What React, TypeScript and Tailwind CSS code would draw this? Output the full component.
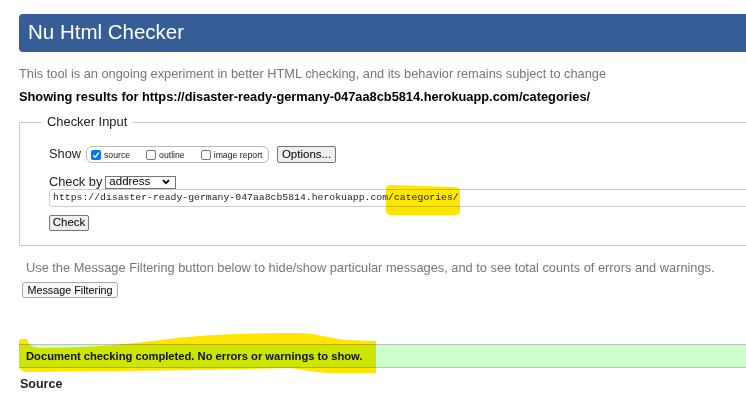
import { FC } from 'react'

const Box: FC<{ checked?: boolean }> = ({ checked }) => (
  <span
    className={
      checked
        ? 'inline-flex shrink-0 items-center justify-center w-[10px] h-[10px] rounded-[2px] bg-[#0075ff]'
        : 'inline-flex shrink-0 w-[10px] h-[10px] rounded-[2px] border border-[#767676] bg-white'
    }
  >
    {checked && (
      <svg width="8" height="8" viewBox="0 0 8 8">
        <path d="M1.2 4.2 L3.2 6.2 L6.8 1.6" stroke="white" strokeWidth="1.5" fill="none" />
      </svg>
    )}
  </span>
)

export default function App() {
  return (
    <div className="relative w-[746px] h-[400px] overflow-hidden bg-white font-['Liberation_Sans',Arial,sans-serif] text-black">
      <div className="w-[800px] pl-[19px] pt-[14px]">
        {/* Header */}
        <div className="h-[38px] bg-[#365d96] rounded-l-[4px] flex items-center pl-[9px] pb-[2px]">
          <h1 className="text-white text-[20.5px] leading-none">Nu Html Checker</h1>
        </div>

        <p className="mt-[12px] text-[12.8px] leading-[20px] text-[#777] whitespace-nowrap">
          This tool is an ongoing experiment in better HTML checking, and its behavior remains subject to change
        </p>
        <p className="mt-[5px] text-[12.8px] leading-[16px] font-bold whitespace-nowrap">
          Showing results for https://disaster-ready-germany-047aa8cb5814.herokuapp.com/categories/
        </p>

        {/* Checker input */}
        <fieldset className="mt-[9px] border border-[#ccc] border-r-0 pb-[14px]">
          <legend className="ml-[22px] px-[5px] text-[12.9px] leading-[16px] text-[#222]">Checker Input</legend>

          <div className="pl-[29px]">
            <div className="mt-[16px] flex items-center h-[17px]">
              <span className="text-[12.8px] leading-none text-[#222]">Show</span>
              <div className="ml-[5px] h-[17px] w-[183px] border border-[#bbb] rounded-[6px] flex items-center pl-[4px] text-[8.7px] text-[#222] whitespace-nowrap">
                <Box checked />
                <span className="ml-[3px] mt-[2px]">source</span>
                <span className="ml-[16px] flex"><Box /></span>
                <span className="ml-[3px] mt-[2px]">outline</span>
                <span className="ml-[16px] flex"><Box /></span>
                <span className="ml-[3px] mt-[2px]">image report</span>
              </div>
              <button className="ml-[8px] h-[17px] w-[59px] bg-[#efefef] border border-[#767676] rounded-[2px] text-[11.5px] leading-none">
                Options...
              </button>
            </div>

            <div className="mt-[12px] flex items-center h-[14px]">
              <span className="text-[12.8px] leading-none text-[#222]">Check by</span>
              <div className="ml-[3px] h-[13px] w-[71px] border border-[#767676] flex items-center pl-[3px] pr-[5px] text-[11.5px] leading-none">
                <span>address</span>
                <svg className="ml-auto" width="8" height="6" viewBox="0 0 8 6">
                  <path d="M1 1.2 L4 4.2 L7 1.2" stroke="black" strokeWidth="1.8" fill="none" />
                </svg>
              </div>
            </div>

            <div className="h-[18px] border border-[#ccc] border-r-0 rounded-l-[4px] flex items-center pl-[3px] font-['Liberation_Mono',monospace] text-[9.8px] text-[#222] whitespace-nowrap">
              https://disaster-ready-germany-047aa8cb5814.herokuapp.com/categories/
            </div>

            <button className="mt-[8px] block h-[16px] w-[40px] bg-[#efefef] border border-[#767676] rounded-[2px] text-[11.5px] leading-none">
              Check
            </button>
          </div>
        </fieldset>

        <p className="mt-[13px] ml-[7px] text-[12.8px] leading-[18px] text-[#777] whitespace-nowrap">
          Use the Message Filtering button below to hide/show particular messages, and to see total counts of errors and warnings.
        </p>
        <button className="mt-[5px] ml-[3px] block h-[16px] w-[96px] bg-[#f8f8f8] border border-[#aaa] rounded-[3px] text-[10.8px] leading-none">
          Message Filtering
        </button>

        {/* Result */}
        <div className="mt-[46px] h-[24px] bg-[#ccffcc] border-y border-[#c0c0c0] flex items-center pl-[7px] text-[11.2px] font-bold text-[#111] whitespace-nowrap">
          Document checking completed. No errors or warnings to show.
        </div>
        <h2 className="mt-[8px] ml-[1px] text-[12.5px] leading-[16px] font-bold text-[#222]">Source</h2>
      </div>

      {/* Highlighter marks */}
      <svg className="absolute inset-0 pointer-events-none mix-blend-multiply" width="746" height="400" viewBox="0 0 746 400">
        <path
          d="M386,189 Q386,185 391,185 L454,187 Q460,187 460,191 L460,211 Q460,215 455,215 L391,215 Q386,215 386,211 Z"
          fill="#ffe600"
        />
        <path
          d="M19,341 Q19,339 22,339 L27,339 Q29,348 40,348 C90,348 130,344 160,340 C200,334 260,333 300,333 C320,334 330,338 345,340 L376,341 L376,373 L330,373 C310,372 300,369 290,368 L200,370 L28,372 Q19,372 19,365 Z"
          fill="#ffe600"
        />
      </svg>
    </div>
  )
}
